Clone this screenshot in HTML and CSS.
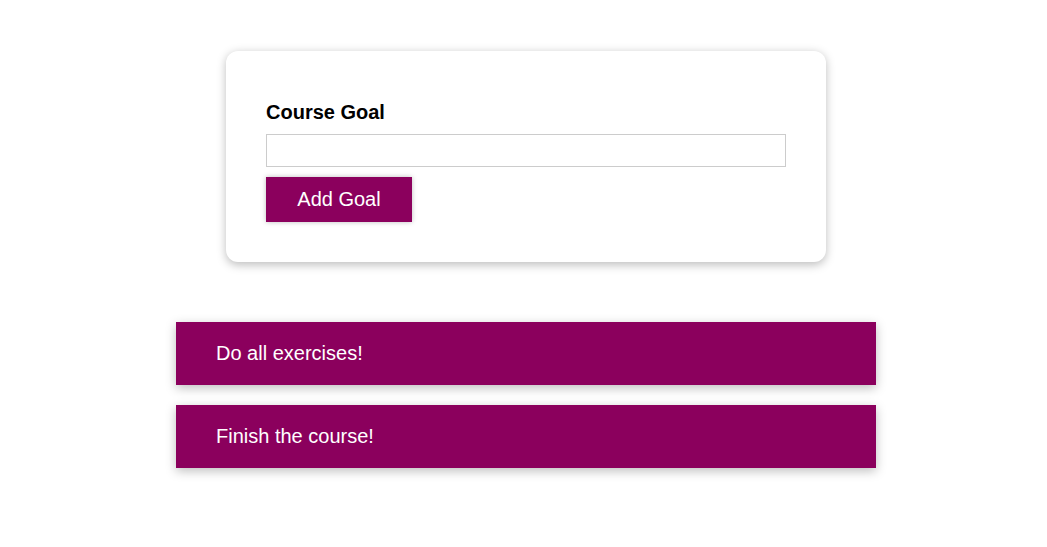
FILE: index.html
```html
<!DOCTYPE html>
<html lang="en">
<head>
<meta charset="utf-8">
<title>Course Goals</title>
<link rel="stylesheet" href="styles.css">
</head>
<body>
<div class="app">
  <section class="goal-form">
    <form>
      <div class="form-control">
        <label for="goal">Course Goal</label>
        <input id="goal" type="text">
      </div>
      <button type="button" class="button">Add Goal</button>
    </form>
  </section>
  <section class="goals">
    <ul class="goal-list">
      <li class="goal-item">Do all exercises!</li>
      <li class="goal-item">Finish the course!</li>
    </ul>
  </section>
</div>
</body>
</html>
```
FILE: styles.css
```css
* { box-sizing: border-box; }
html { font-family: "Liberation Sans", Arial, sans-serif; font-size: 20px; }
body { margin: 0; background: #fff; }
.app { padding-left: 5px; padding-top: 1px; }
.goal-form {
  width: 600px;
  margin: 50px auto 60px;
  padding: 40px;
  border-radius: 12px;
  box-shadow: 0 2.5px 10px rgba(0,0,0,0.26);
  background: #fff;
}
.form-control { margin: 10px 0; }
.form-control label {
  display: block;
  font-weight: bold;
  font-size: 20px;
  line-height: 23px;
  margin-bottom: 10px;
  color: #000;
}
.form-control input {
  display: block;
  width: 100%;
  height: 33px;
  border: 1px solid #ccc;
  font: inherit;
  padding: 0 5px;
  margin: 0;
  outline: none;
}
.button {
  font: inherit;
  font-size: 20px;
  line-height: 23px;
  height: 45px;
  width: 146px;
  padding: 10px 0;
  border: 1px solid #8b005d;
  color: #fff;
  background: #8b005d;
  box-shadow: 0 0 5px rgba(0,0,0,0.26);
  cursor: pointer;
  display: block;
}
.goals { width: 700px; margin: 60px auto; }
.goal-list { list-style: none; margin: 0; padding: 0; }
.goal-item {
  margin: 20px 0;
  background: #8b005d;
  color: #fff;
  padding: 20px 40px;
  font-size: 20px;
  line-height: 23px;
  box-shadow: 0 2.5px 10px rgba(0,0,0,0.26);
}
```
